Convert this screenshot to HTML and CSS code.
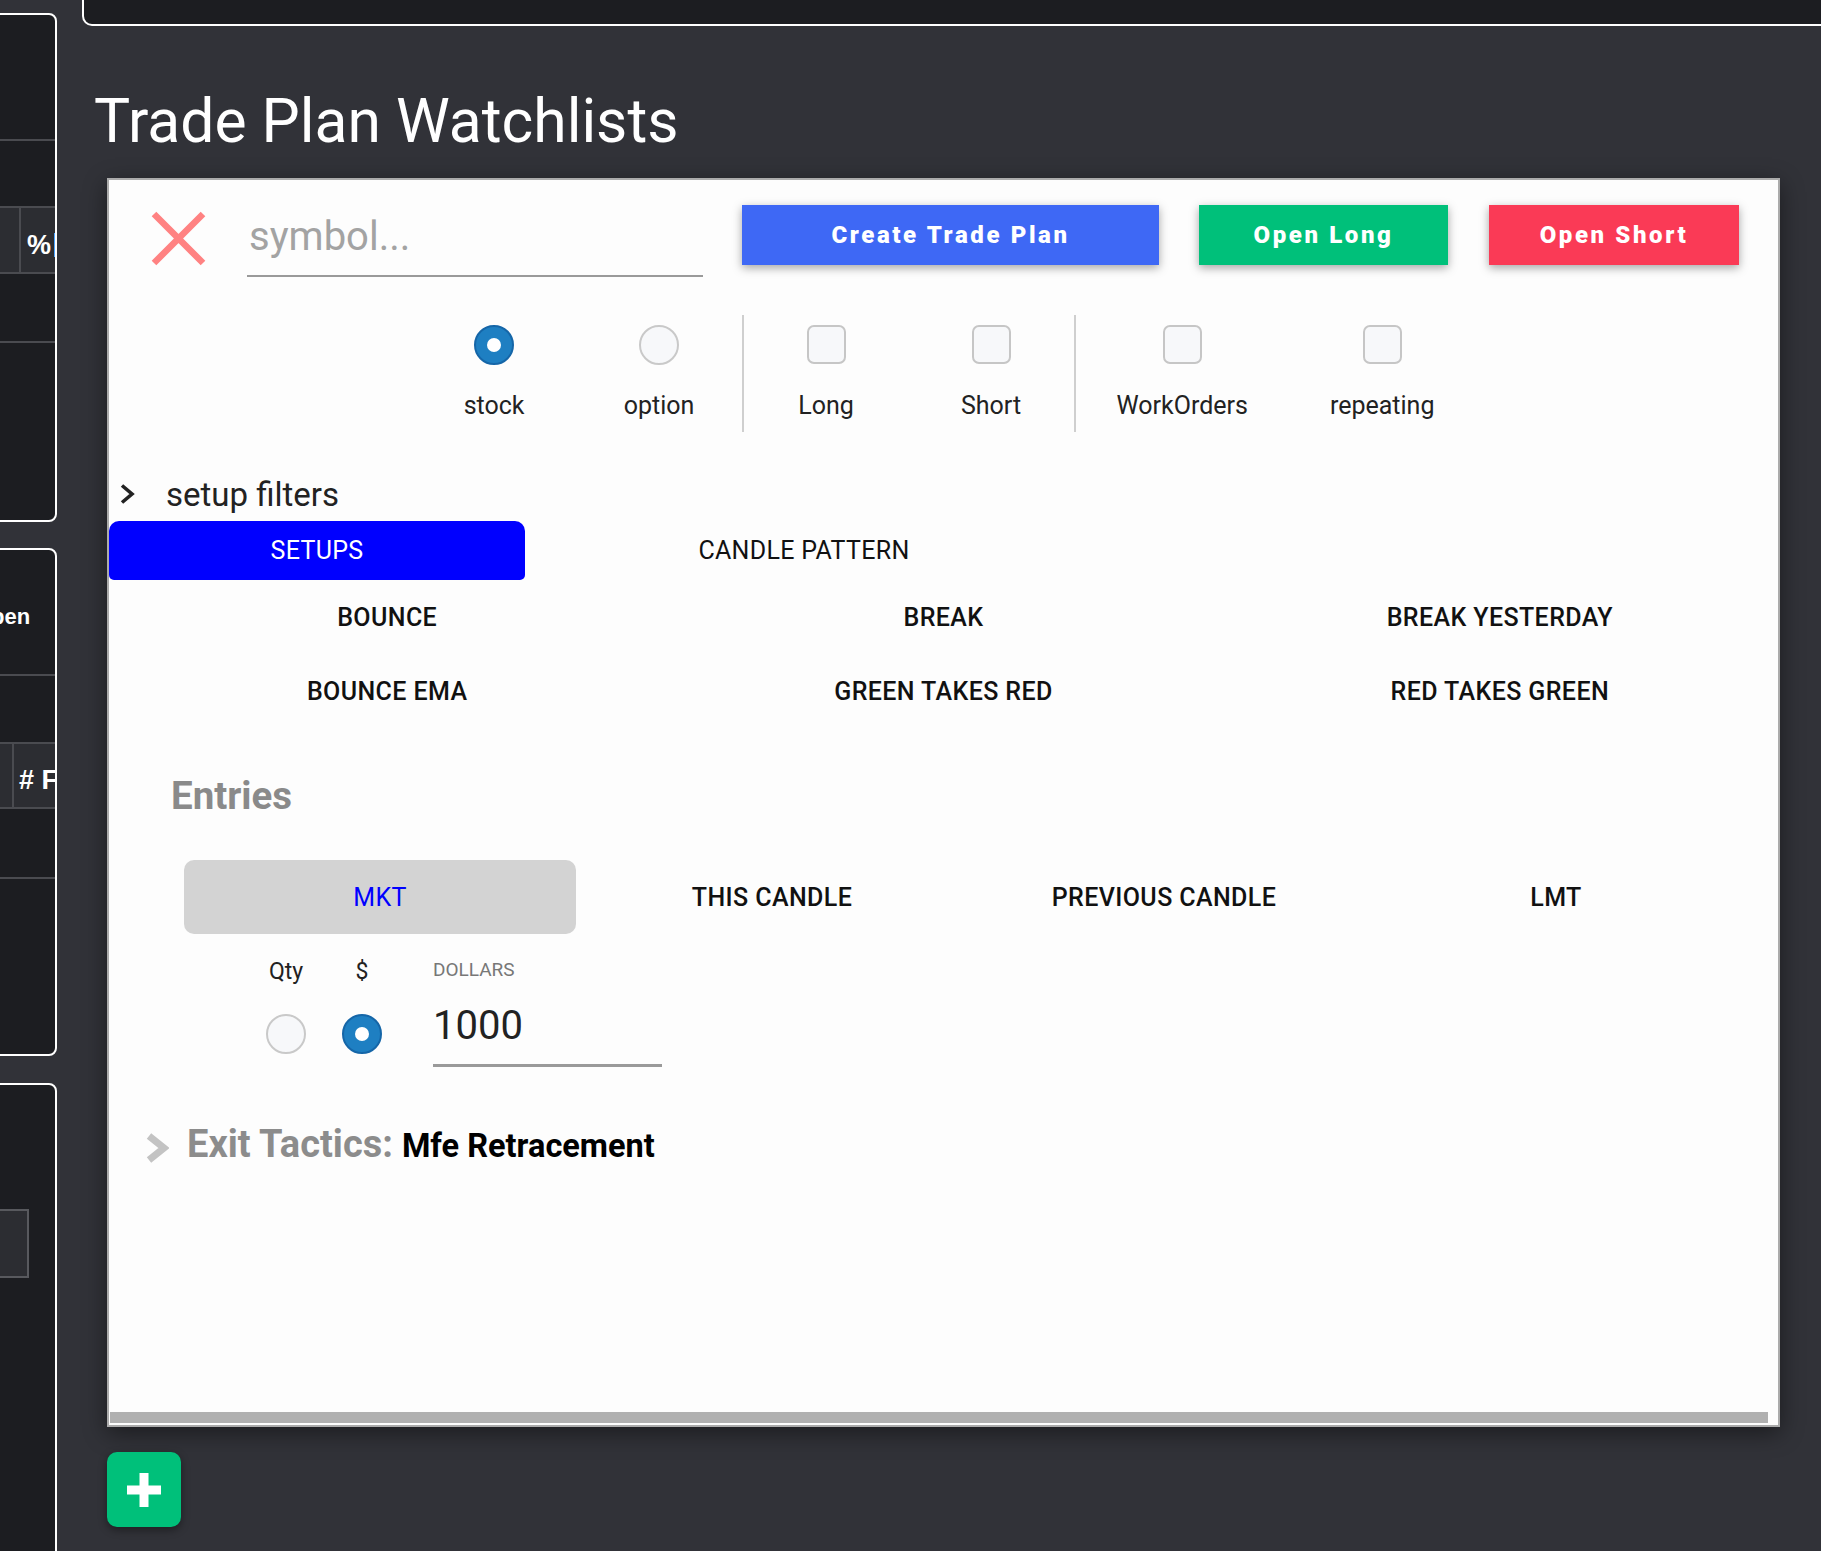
FILE: index.html
```html
<!DOCTYPE html>
<html lang="en">
<head>
<meta charset="utf-8">
<title>Trade Plan Watchlists</title>
<link rel="stylesheet" href="styles.css">
</head>
<body>
<div class="page">
  <aside class="sidebar">
    <div class="sb-panel p1">
      <div class="sb-space s124"></div>
      <div class="sb-line"></div>
      <div class="sb-space s65"></div>
      <div class="sb-row r1">
        <div class="sb-cell c1a"></div>
        <div class="sb-cell c2a"><span class="sb-txt">%</span><span class="sb-caret"></span></div>
      </div>
      <div class="sb-space s67"></div>
      <div class="sb-line"></div>
    </div>
    <div class="sb-panel p2">
      <div class="sb-title">Open</div>
      <div class="sb-line"></div>
      <div class="sb-space s66"></div>
      <div class="sb-row r2">
        <div class="sb-cell c1b"></div>
        <div class="sb-cell c2b"><span class="sb-txt">#&nbsp;Fills</span></div>
      </div>
      <div class="sb-space s68"></div>
      <div class="sb-line"></div>
    </div>
    <div class="sb-panel p3">
      <div class="sb-space s124"></div>
      <div class="sb-box"></div>
    </div>
  </aside>

  <main class="main">
    <div class="topbar"></div>
    <h1 class="title">Trade Plan Watchlists</h1>

    <section class="card">
      <div class="header">
        <svg class="close-x" width="55" height="55" viewBox="0 0 55 55"><path d="M3 3L52 52M52 3L3 52" stroke="#ff8282" stroke-width="6.5" fill="none"/></svg>
        <input class="symbol" type="text" placeholder="symbol...">
        <button class="btn btn-create">Create Trade Plan</button>
        <button class="btn btn-long">Open Long</button>
        <button class="btn btn-short">Open Short</button>
      </div>

      <div class="opts">
        <div class="opt"><span class="radio checked"></span><span class="opt-label">stock</span></div>
        <div class="opt"><span class="radio"></span><span class="opt-label">option</span></div>
        <div class="sep"></div>
        <div class="opt"><span class="check"></span><span class="opt-label">Long</span></div>
        <div class="opt"><span class="check"></span><span class="opt-label">Short</span></div>
        <div class="sep"></div>
        <div class="opt"><span class="check"></span><span class="opt-label">WorkOrders</span></div>
        <div class="opt"><span class="check"></span><span class="opt-label">repeating</span></div>
      </div>

      <div class="filters">
        <svg width="16" height="22" viewBox="0 0 16 22"><path d="M3 2.5L13 11L3 19.5" stroke="#222" stroke-width="3.6" fill="none"/></svg>
        <span class="filters-label">setup filters</span>
      </div>

      <div class="tabs">
        <div class="tab tab-setups">SETUPS</div>
        <div class="tab tab-candle">CANDLE PATTERN</div>
      </div>

      <div class="setups">
        <div class="setup">BOUNCE</div>
        <div class="setup">BREAK</div>
        <div class="setup">BREAK YESTERDAY</div>
        <div class="setup">BOUNCE EMA</div>
        <div class="setup">GREEN TAKES RED</div>
        <div class="setup">RED TAKES GREEN</div>
      </div>

      <h2 class="entries">Entries</h2>

      <div class="etabs">
        <div class="etab active">MKT</div>
        <div class="etab">THIS CANDLE</div>
        <div class="etab">PREVIOUS CANDLE</div>
        <div class="etab">LMT</div>
      </div>

      <div class="qty-row">
        <div class="qcol"><span class="qlabel">Qty</span><span class="radio"></span></div>
        <div class="qcol"><span class="qlabel">$</span><span class="radio checked"></span></div>
        <div class="dollars">
          <div class="dlabel">DOLLARS</div>
          <div class="dvalue">1000</div>
        </div>
      </div>

      <div class="exit">
        <svg width="24" height="30" viewBox="0 0 24 30"><path d="M4 3L19 15L4 27" stroke="#c3c3c3" stroke-width="7" fill="none"/></svg>
        <span class="exit-text"><span class="exit-key">Exit Tactics:</span><span class="exit-val">Mfe Retracement</span></span>
      </div>

      <div class="hscroll"></div>
    </section>

    <button class="add-btn" aria-label="add">
      <svg width="34" height="34" viewBox="0 0 34 34"><rect x="12.5" y="0" width="9" height="34" fill="#fff"/><rect x="0" y="12.5" width="34" height="9" fill="#fff"/></svg>
    </button>
  </main>
</div>
</body>
</html>
```

FILE: styles.css
```css
html, body {
  margin: 0;
  padding: 0;
  background: #313238;
}
body {
  font-family: Roboto, "Liberation Sans", sans-serif;
  height: 1551px;
  overflow: hidden;
}
.page {
  display: flex;
  height: 1551px;
  overflow: hidden;
}

/* ---------- sidebar ---------- */
.sidebar {
  width: 57px;
  flex: none;
  overflow: hidden;
}
.sb-panel {
  margin-left: -13px;
  width: 70px;
  box-sizing: border-box;
  border: 2px solid #ffffff;
  border-radius: 8px;
  background: #1c1d21;
  display: flex;
  flex-direction: column;
  overflow: hidden;
}
.p1 { margin-top: 13px; height: 509px; }
.p2 { margin-top: 26px; height: 508px; }
.p3 { margin-top: 27px; height: 600px; }
.sb-space { flex: none; }
.s124 { height: 124px; }
.s65 { height: 65px; }
.s66 { height: 66px; }
.s67 { height: 67px; }
.s68 { height: 68px; }
.sb-line {
  height: 2px;
  background: #4a4b50;
  flex: none;
}
.sb-row {
  display: flex;
  box-sizing: border-box;
  border-top: 2px solid #4a4b50;
  border-bottom: 2px solid #4a4b50;
  background: #2c2d32;
  flex: none;
}
.r1 { height: 68px; }
.r2 { height: 67px; }
.sb-cell {
  display: flex;
  align-items: center;
  white-space: nowrap;
}
.c1a { width: 30px; border-right: 2px solid #4a4b50; flex: none; }
.c2a { padding-left: 6px; padding-top: 10px; }
.c1b { width: 23px; border-right: 2px solid #4a4b50; flex: none; }
.c2b { padding-left: 5px; padding-top: 9px; }
.sb-txt {
  font-family: "Liberation Sans", Arial, sans-serif;
  font-weight: 700;
  font-size: 27px;
  color: #ffffff;
}
.sb-caret {
  width: 3px;
  height: 24px;
  margin-left: 3px;
  background: #ffffff;
  border-left: 1px solid #4aa3ff;
}
.sb-title {
  height: 124px;
  box-sizing: border-box;
  padding-top: 52px;
  margin-left: -15px;
  font-family: "Liberation Sans", Arial, sans-serif;
  font-weight: 700;
  font-size: 22px;
  line-height: 30px;
  color: #ffffff;
  white-space: nowrap;
  flex: none;
}
.sb-box {
  width: 40px;
  height: 69px;
  box-sizing: border-box;
  border: 2px solid #58595e;
  background: #2c2d32;
}

/* ---------- main ---------- */
.main {
  flex: 1;
  min-width: 0;
}
.topbar {
  height: 26px;
  margin-left: 25px;
  margin-right: -20px;
  box-sizing: border-box;
  border: 2px solid #ffffff;
  border-top: none;
  border-radius: 0 0 0 10px;
  background: #1c1d21;
}
.title {
  margin: 60px 0 0 37px;
  font-size: 60.6px;
  line-height: 72px;
  font-weight: 400;
  color: #ffffff;
}

.card {
  margin: 20px 0 0 50px;
  width: 1673px;
  height: 1249px;
  box-sizing: border-box;
  border: 2px solid #ababab;
  background: #fdfdfd;
  box-shadow: 0 6px 22px rgba(0, 0, 0, 0.45);
  display: flex;
  flex-direction: column;
}

/* header row */
.header {
  display: flex;
  align-items: flex-start;
  padding: 25px 0 0 42px;
}
.close-x {
  margin-top: 6px;
  flex: none;
}
.symbol {
  margin-left: 41px;
  width: 456px;
  height: 72px;
  box-sizing: border-box;
  border: none;
  border-bottom: 2px solid #9a9a9a;
  background: transparent;
  outline: none;
  padding: 0 0 8px 2px;
  font-family: Roboto, sans-serif;
  font-size: 40px;
  color: #222;
}
.symbol::placeholder {
  color: #a3a3a3;
}
.btn {
  height: 60px;
  border: none;
  color: #ffffff;
  font-family: Roboto, sans-serif;
  font-weight: 900;
  font-size: 24px;
  letter-spacing: 2.6px;
  box-shadow: 0 3px 9px rgba(0, 0, 0, 0.35);
  flex: none;
}
.btn-create { margin-left: 39px; width: 417px; background: #3e68f5; }
.btn-long { margin-left: 40px; width: 249px; background: #00c07a; }
.btn-short { margin-left: 41px; width: 250px; background: #fa3a56; }

/* options row */
.opts {
  display: flex;
  justify-content: center;
  margin-top: 38px;
  height: 117px;
}
.opt {
  min-width: 165px;
  padding: 10px 41px 0;
  box-sizing: border-box;
  display: flex;
  flex-direction: column;
  align-items: center;
}
.opt-label {
  margin-top: 26px;
  font-size: 25px;
  line-height: 30px;
  color: #222;
  white-space: nowrap;
}
.sep {
  width: 2px;
  background: #cfcfcf;
}
.radio {
  display: block;
  width: 40px;
  height: 40px;
  box-sizing: border-box;
  border-radius: 50%;
  border: 2px solid #c9c9c9;
  background: #f7f8fa;
  position: relative;
}
.radio.checked {
  border-color: #1566a8;
  background: #1e7fc2;
}
.radio.checked::after {
  content: "";
  position: absolute;
  left: 11px;
  top: 11px;
  width: 14px;
  height: 14px;
  border-radius: 50%;
  background: #ffffff;
}
.check {
  display: block;
  width: 39px;
  height: 39px;
  margin-bottom: 1px;
  box-sizing: border-box;
  border-radius: 7px;
  border: 2px solid #c6c6c6;
  background: #f7f8fa;
}

/* setup filters */
.filters {
  display: flex;
  align-items: center;
  height: 40px;
  margin-top: 42px;
  padding-left: 10px;
}
.filters-label {
  margin-left: 31px;
  font-size: 33px;
  color: #222;
}
.tabs {
  display: flex;
  margin-top: 7px;
  height: 59px;
}
.tab {
  display: flex;
  align-items: center;
  justify-content: center;
  font-size: 25px;
  color: #111;
  letter-spacing: 0.3px;
}
.tab-setups {
  width: 416px;
  background: #0000ff;
  color: #ffffff;
  border-radius: 10px 10px 5px 5px;
}
.tab-candle {
  width: 558px;
}
.setups {
  display: grid;
  grid-template-columns: repeat(3, 1fr);
  grid-auto-rows: 74px;
}
.setup {
  display: flex;
  align-items: center;
  justify-content: center;
  font-size: 25px;
  font-weight: 500;
  color: #111;
  letter-spacing: 0.4px;
}

/* entries */
.entries {
  margin: 46px 0 0 0;
  padding-left: 62px;
  font-size: 38.5px;
  line-height: 44px;
  font-weight: 700;
  color: #8a8a8a;
}
.etabs {
  display: grid;
  grid-template-columns: repeat(4, 392px);
  margin: 42px 0 0 75px;
  height: 74px;
}
.etab {
  display: flex;
  align-items: center;
  justify-content: center;
  font-size: 25px;
  font-weight: 500;
  color: #111;
  letter-spacing: 0.4px;
}
.etab.active {
  background: #d3d3d3;
  border-radius: 10px;
  color: #0000ff;
  font-weight: 400;
}
.qty-row {
  display: flex;
  align-items: flex-start;
  margin-top: 24px;
  padding-left: 139px;
}
.qcol {
  width: 76px;
  display: flex;
  flex-direction: column;
  align-items: center;
}
.qlabel {
  font-size: 23px;
  line-height: 28px;
  color: #222;
  margin-bottom: 28px;
}
.dollars {
  margin-left: 33px;
  width: 229px;
}
.dlabel {
  font-size: 19px;
  line-height: 24px;
  color: #777;
}
.dvalue {
  margin-top: 19px;
  height: 50px;
  line-height: 50px;
  font-size: 40px;
  color: #222;
  padding-bottom: 13px;
  border-bottom: 3px solid #9a9a9a;
}

/* exit */
.exit {
  display: flex;
  align-items: center;
  height: 48px;
  margin-top: 57px;
  padding-left: 36px;
}
.exit-text {
  margin-left: 18px;
  line-height: 48px;
  white-space: nowrap;
}
.exit-key {
  font-size: 38px;
  font-weight: 700;
  color: #8c8c8c;
}
.exit-val {
  margin-left: 9px;
  font-size: 32.5px;
  font-weight: 700;
  color: #000;
}
.hscroll {
  margin: auto 10px 2px 1px;
  height: 11px;
  background: #b0b0b0;
}

/* add button */
.add-btn {
  margin: 25px 0 0 50px;
  width: 74px;
  height: 75px;
  border: none;
  border-radius: 10px;
  background: #00c07a;
  box-shadow: 0 3px 8px rgba(0, 0, 0, 0.4);
  display: flex;
  align-items: center;
  justify-content: center;
  padding: 0;
}
```
